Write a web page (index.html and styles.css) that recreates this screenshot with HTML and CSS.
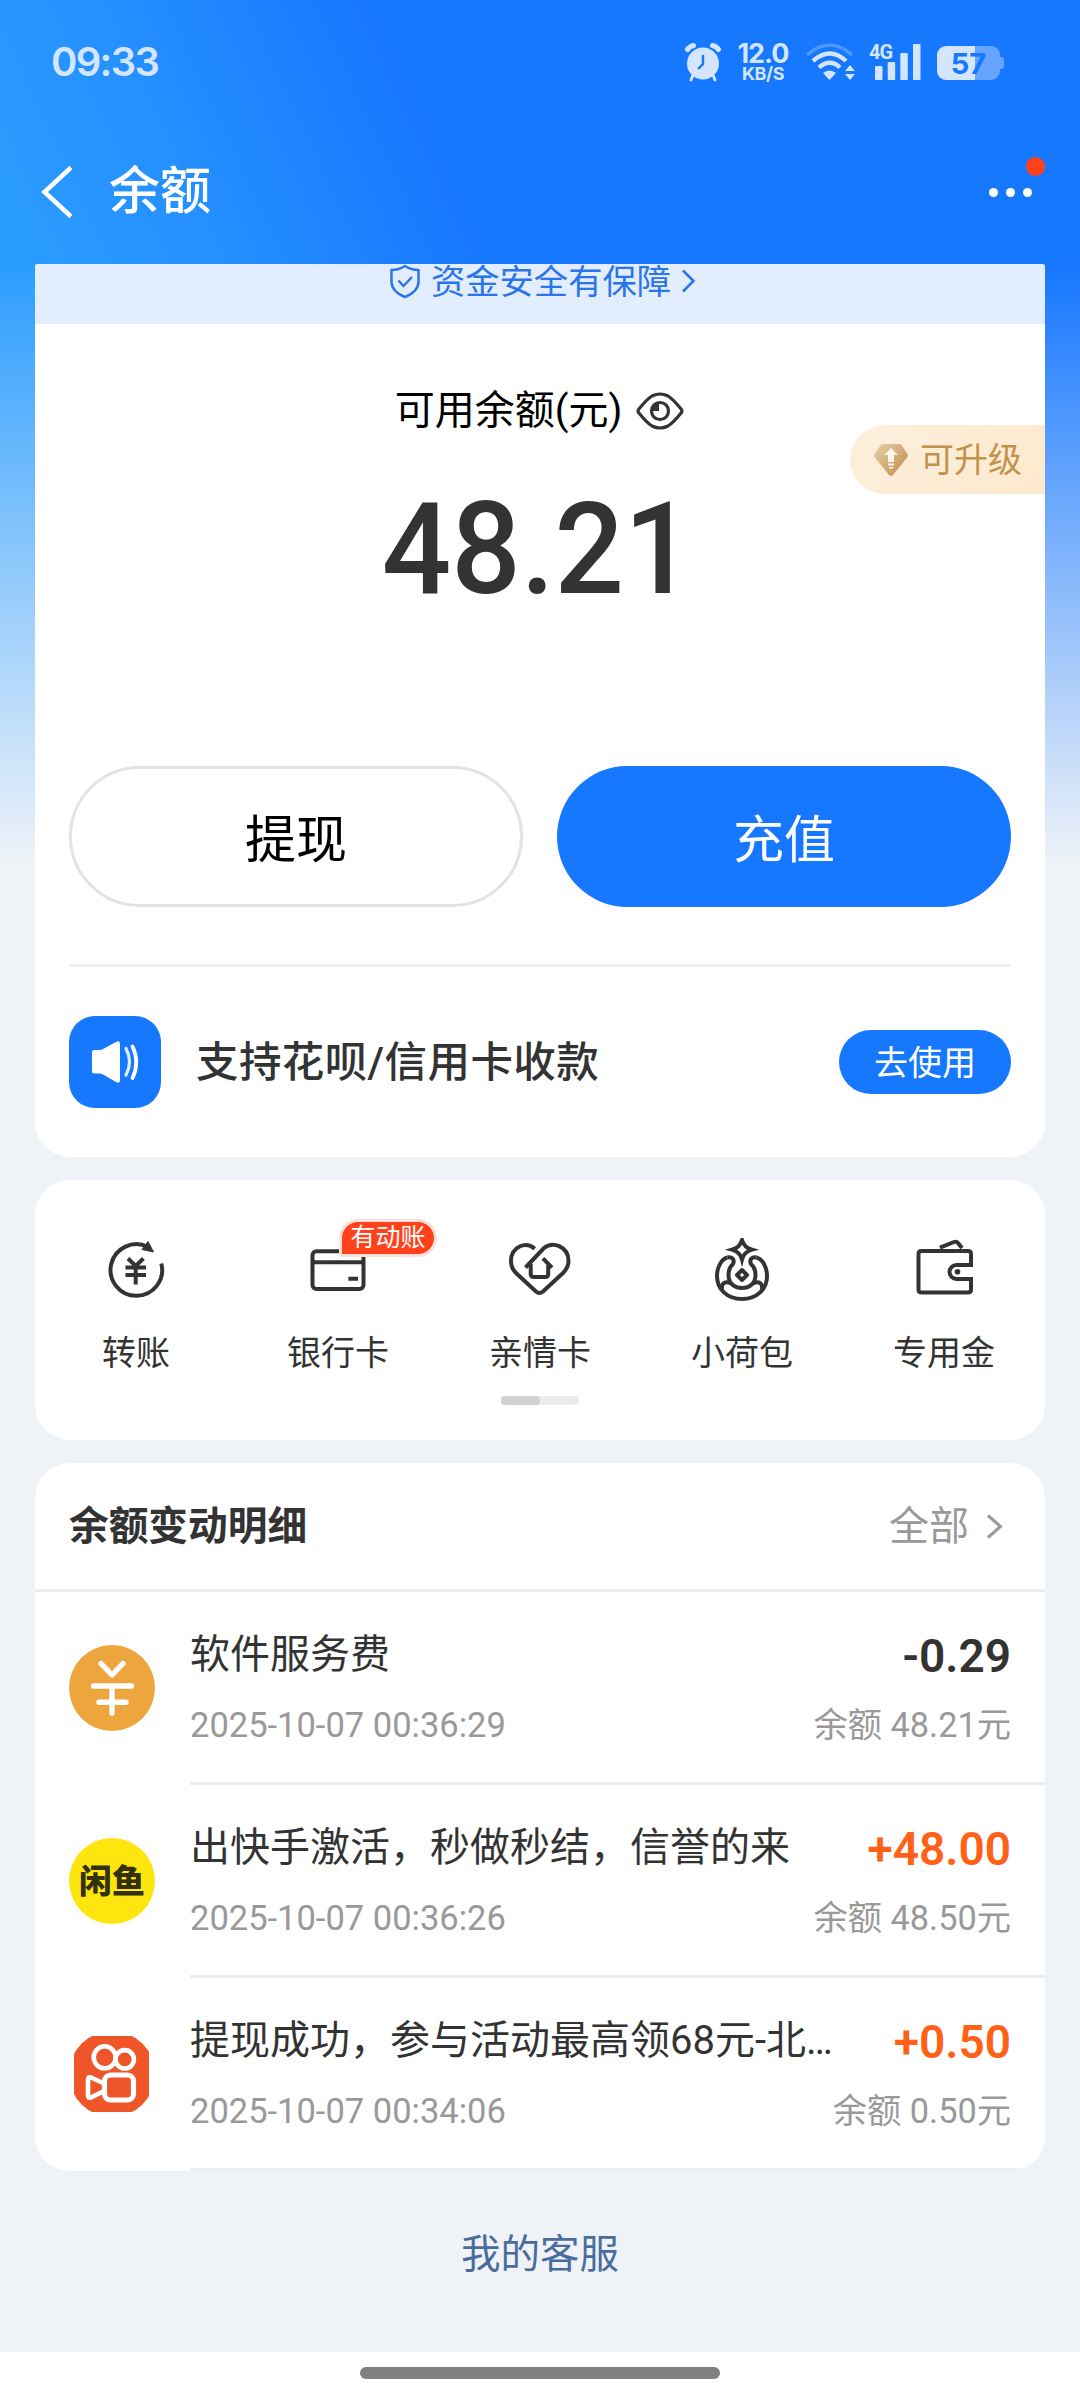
FILE: index.html
```html
<!DOCTYPE html>
<html lang="zh-CN">
<head>
<meta charset="utf-8">
<title>余额</title>
<link rel="stylesheet" href="styles.css">
</head>
<body>
<div class="page">
  <header class="header">
    <div class="status">
      <span class="clock">09:33</span>
      <div class="status-icons">
        <svg class="alarm" width="38" height="40" viewBox="0 0 38 40">
          <g fill="none" stroke="currentColor" stroke-width="5" stroke-linecap="round"><path d="M3.500 7.500Q5.500 4.500 9.500 3.500M34.500 7.500Q32.500 4.500 28.500 3.500"/><path d="M9 33l-2 5M29 33l2 5" stroke-width="3"/></g>
          <circle cx="19" cy="21.500" r="16" fill="currentColor"/>
          <path d="M19 13v9l-5 5" fill="none" stroke="#1677ff" stroke-width="2.400"/>
        </svg>
        <div class="speed"><b>12.0</b><span>KB/S</span></div>
        <svg class="wifi" width="52" height="38" viewBox="0 0 52 38">
          <path d="M2 12Q25-8 47 12" fill="none" stroke="currentColor" stroke-width="3.400" opacity=".3"/>
          <g fill="none" stroke="currentColor" stroke-width="4.400"><path d="M8 18Q25 3 41 18"/><path d="M14 24.500Q25 15 35 24.500"/></g>
          <path d="M18 30Q24.500 25 31 30L24.500 37Z" fill="currentColor"/>
          <path d="M40 28l5-6 5 6zM40 31h10l-5 6z" fill="currentColor"/>
        </svg>
        <div class="signal">
          <span>4G</span>
          <svg width="46" height="38" viewBox="0 0 46 38" fill="currentColor"><rect x="0" y="23" width="7.500" height="14" rx="1"/><rect x="12.700" y="19" width="7.500" height="18" rx="1"/><rect x="25.300" y="10" width="7.500" height="27" rx="1"/><rect x="38" y="1" width="7.500" height="36" rx="1"/></svg>
        </div>
        <div class="battery"><span>57</span></div>
      </div>
    </div>
    <div class="nav">
      <svg class="back" width="32" height="52" viewBox="0 0 32 52"><path d="M31 1.500L4.500 26 31 50.500" fill="none" stroke="#fff" stroke-width="4.600"/></svg>
      <h1>余额</h1>
      <div class="more"><i></i><i></i><i></i><b class="dot"></b></div>
    </div>
  </header>

  <main class="content">
    <section class="card balance">
      <div class="guard">
        <svg width="32" height="35" viewBox="0 0 32 35" fill="none" stroke="#2b74ea" stroke-width="2.500"><path d="M16 2Q22 6 29.500 6V18Q29 28 16 33Q3 28 2.500 18V6Q10 6 16 2Z" stroke-linejoin="round"/><path d="M9.500 16.500l5 5.500 8.500-9"/></svg>
        <span>资金安全有保障</span>
        <svg width="15" height="24" viewBox="0 0 15 24"><path d="M2 1.500L12.500 12 2 22.500" fill="none" stroke="#2b74ea" stroke-width="2.500"/></svg>
      </div>
      <div class="label">
        <span>可用余额(元)</span>
        <svg width="48" height="38" viewBox="0 0 48 38" fill="none" stroke="#333" stroke-width="3.200"><path d="M2.500 17.500Q11 7 16 4Q24 0 32 4Q37 7 45.500 17.500Q46.300 19 45.500 20.500Q37 31 32 34Q24 38 16 34Q11 31 2.500 20.500Q1.700 19 2.500 17.500Z"/><circle cx="24" cy="19" r="8.500"/><path d="M17 12h6v7h-6z" fill="#333" stroke="none"/></svg>
      </div>
      <div class="amount">48.21</div>
      <div class="upgrade">
        <svg width="36" height="34" viewBox="0 0 36 34"><defs><linearGradient id="gem" x1="0" y1="0" x2="1" y2="1"><stop offset="0" stop-color="#e8cfaa"/><stop offset="1" stop-color="#bd8c48"/></linearGradient></defs><path d="M10 1h16q1.500 0 2.500 1l6 9q1 1.500 0 3L20 32q-2 2-4 0L1.500 14q-1-1.500 0-3l6-9q1-1 2.500-1z" fill="url(#gem)"/><path d="M18 5l7 7h-4v7h-6v-7h-4zM15 20.500h6v2h-6zM16 24h4v1.500h-4z" fill="#fff8ec"/></svg>
        <span>可升级</span>
      </div>
      <div class="actions"><button class="btn plain">提现</button><button class="btn primary">充值</button></div>
      <div class="notice">
        <svg width="92" height="92" viewBox="0 0 92 92"><rect width="92" height="92" rx="26" fill="#1677ff"/><path d="M25 34h6q2 0 4-1.500L47 26q4-2 4 2v36q0 4-4 2L35 59q-2-1.500-4-1.500h-6q-2 0-2-2V36q0-2 2-2z" fill="#fff"/><path d="M57 32.500q7 13.500 0 26.500" fill="none" stroke="#d9f0ff" stroke-width="3.200" stroke-linecap="round"/><path d="M63.500 30.500q7.500 15.500 0 31.500" fill="none" stroke="#fff" stroke-width="3.800" stroke-linecap="round"/></svg>
        <span>支持花呗/信用卡收款</span>
        <button class="use">去使用</button>
      </div>
    </section>

    <section class="card tools">
      <div class="grid">
        <div class="tool">
          <svg viewBox="0 0 64 64"><path d="M57.300 25.500A25.800 25.800 0 1 1 44 9"/><path d="M44 3.500L49.500 14 38 11.500Z" fill="#333" stroke-width="1"/><path d="M24 20.500l7.700 7.500 7.700-7.500M21.500 29.500h20.500M21.500 37h20.500M31.700 28v18.500"/></svg>
          <span>转账</span>
        </div>
        <div class="tool">
          <svg viewBox="0 0 64 64"><rect x="6.500" y="13.200" width="51" height="37.800" rx="4"/><path d="M6.500 24.300h51M42.400 40.700H52"/></svg>
          <span>银行卡</span>
          <em class="badge">有动账</em>
        </div>
        <div class="tool">
          <svg viewBox="0 0 64 64"><path d="M26.700 10.700C18 3 3 8.500 3 23C3 28.500 5 32 8 35L28 53.500Q31.500 56.500 35 53.500L55 35C59 31 60.500 28 60.500 23C60.500 8.500 45 3 36 10L17.500 29.500"/><path d="M22.700 26v10q0 3 3 3h11.500q3 0 3-3V27M34.900 20.300L44 29.700"/></svg>
          <span>亲情卡</span>
        </div>
        <div class="tool">
          <svg viewBox="0 0 64 64"><path d="M32 2Q34 9.500 42 11.700Q34 14 32 21.500Q30 14 22 11.700Q30 9.500 32 2Z"/><path d="M17.500 19.500C11 21 7 30 7 38C7 51 17 61 32 61S57 51 57 38C57 30 53 21 46.500 19.500"/><path d="M17.500 19.500C22 18.500 25 21.500 23 26C20 28.500 18.500 32 18.500 37C18.500 45 24 50 32 50S45.500 45 45.500 37C45.500 32 44 28.500 41 26C39 21.500 42 18.500 46.500 19.500"/><path d="M12 52C11 45 15 43 20.500 45M52 52C53 45 49 43 43.500 45"/><path d="M32 32l5 5-5 5-5-5z" stroke-linejoin="round"/></svg>
          <span>小荷包</span>
        </div>
        <div class="tool">
          <svg viewBox="0 0 64 64"><path d="M59 27V16q0-3-3-3H9.500q-3 0-3 3v35.500q0 3 3 3H56q3 0 3-3V41H44.500a7 7 0 0 1 0-14z"/><path d="M28 9.700L42 4q2.500-1 4 1l4 5" /><circle cx="45.500" cy="33.700" r="2.800" fill="#333" stroke="none"/></svg>
          <span>专用金</span>
        </div>
      </div>
      <div class="pager"><i></i></div>
    </section>

    <section class="card history">
      <div class="history-head">
        <h2>余额变动明细</h2>
        <span>全部</span>
        <svg width="18" height="25" viewBox="0 0 18 25"><path d="M2 1.500L14.500 12.500 2 23.500" fill="none" stroke="#999" stroke-width="3"/></svg>
      </div>
      <div class="row">
        <svg class="logo" viewBox="0 0 86 86"><circle cx="43" cy="43" r="43" fill="#eda63e"/><path d="M32 18.500l11 11.500 11-11.500M24.500 41h38M30 57.300h27M43 41v27" fill="none" stroke="#fff" stroke-width="5.400" stroke-linecap="round" stroke-linejoin="round"/></svg>
        <div class="body">
          <div class="line"><p>软件服务费</p><b>-0.29</b></div>
          <div class="line sub"><time>2025-10-07 00:36:29</time><small>余额 48.21元</small></div>
        </div>
      </div>
      <div class="row">
        <div class="logo fish">闲鱼</div>
        <div class="body">
          <div class="line in"><p>出快手激活，秒做秒结，信誉的来</p><b>+48.00</b></div>
          <div class="line sub"><time>2025-10-07 00:36:26</time><small>余额 48.50元</small></div>
        </div>
      </div>
      <div class="row">
        <svg class="logo" viewBox="0 0 86 86"><defs><clipPath id="round"><circle cx="43" cy="43" r="43"/></clipPath></defs><rect x="5" y="5" width="75" height="76" fill="#ee5529" clip-path="url(#round)"/><g fill="none" stroke="#fff" stroke-width="4.600"><circle cx="35.700" cy="26.300" r="11"/><circle cx="55.700" cy="28.300" r="9.200"/><rect x="35.500" y="44" width="29" height="25" rx="6" stroke-width="5.200"/><path d="M35 52.500L22 46.500q-3-1-3 2v16q0 3 3 2L35 60" stroke-linejoin="round"/></g></svg>
        <div class="body">
          <div class="line in"><p>提现成功，参与活动最高领68元-北…</p><b>+0.50</b></div>
          <div class="line sub"><time>2025-10-07 00:34:06</time><small>余额 0.50元</small></div>
        </div>
      </div>
    </section>
    <div class="service">我的客服</div>
  </main>
  <footer class="homebar"><i></i></footer>
</div>
</body>
</html>
```

FILE: styles.css
```css
* { box-sizing: border-box; margin: 0; padding: 0; }
body { width: 1080px; height: 2400px; overflow: hidden; font-family: Roboto, "Noto Sans CJK SC", sans-serif; color: #333; }
svg { display: block; flex: none; }
button { border: 0; font: inherit; }
i, em { font-style: normal; }
.page { width: 1080px; height: 2400px; display: flex; flex-direction: column; background: #eff3f8; }

.header { height: 264px; flex: none; background: linear-gradient(65deg, #2b9dff 0, #2590ff 18%, #1677ff 41%); }
.status { height: 120px; display: flex; justify-content: space-between; padding: 42px 77px 0 51px; color: #d3e5ff; }
.clock { font: 600 40px/40px Inter, sans-serif; letter-spacing: -1.7px; }
.status-icons { display: flex; height: 40px; }
.speed { width: 54px; margin-left: 14px; margin-right: 1px; display: flex; flex-direction: column; align-items: center; font-family: Inter, sans-serif; }
.speed b { font-size: 27px; line-height: 23px; letter-spacing: -1px; }
.speed span { font-size: 18px; font-weight: 700; line-height: 18px; letter-spacing: -.4px; }
.wifi { margin: 1px 0 0 14px; }
.signal { margin-left: 12px; position: relative; padding: 1px 0 0 6px; }
.signal span { position: absolute; left: 0; top: 0; font: 700 20px/20px Roboto, sans-serif; letter-spacing: -1px; }
.battery { position: relative; width: 63px; height: 34px; margin: 4px 3px 0 16px; border-radius: 9px; background: linear-gradient(90deg, #d3e5ff 60%, #65a5ff 60%); text-align: center; font: 700 29px/35px Inter, sans-serif; color: #1677ff; }
.battery::after { content: ""; position: absolute; right: -4px; top: 11px; width: 4px; height: 12px; border-radius: 0 3px 3px 0; background: #65a5ff; }
.nav { height: 144px; display: flex; align-items: flex-start; padding: 45px 48px 0 40px; }
.back { margin-top: 1px; }
.nav h1 { font-size: 51px; font-weight: 500; line-height: 54px; color: #fff; margin-left: 37px; flex: 1; }
.more { position: relative; display: flex; gap: 8px; padding-top: 23px; margin-right: -5px; width: 48px; }
.more i { width: 9px; height: 9px; border-radius: 50%; background: #fff; }
.dot { position: absolute; left: 37px; top: -8px; width: 19px; height: 19px; border-radius: 50%; background: #ff411c; }

.content { height: 2088px; padding: 0 35px; background: linear-gradient(180deg, rgba(239,243,248,0) 0, #eff3f8 601px), linear-gradient(90deg, #2b9dff 0, #2b9dff 35px, #1677ff 600px); }
.card { background: #fff; border-radius: 35px; overflow: hidden; }
.balance { position: relative; height: 893px; border-radius: 3px 3px 35px 35px; }
.guard { height: 60px; background: #e2edfe; display: flex; justify-content: center; padding-left: 5px; color: #2b74ea; font-size: 34.300px; line-height: 36px; }
.guard span { margin: 0 10px 0 10px; }
.guard svg:last-child { margin-top: 5px; }
.label { display: flex; justify-content: center; align-items: center; gap: 14px; height: 56px; margin-top: 59px; padding-right: 1px; font-size: 40px; line-height: 56px; color: #000; }
.amount { height: 128px; margin-top: 46px; padding-right: 5px; text-align: center; font-size: 128px; line-height: 128px; font-weight: 500; transform: scaleX(.955); }
.upgrade { position: absolute; right: 0; top: 161px; width: 195px; height: 69px; padding-left: 23px; display: flex; align-items: center; gap: 11px; border-radius: 35px 0 0 35px; background: linear-gradient(135deg, #fdf0de, #fde9cc); color: #c2924c; font-size: 34px; line-height: 60px; }
.actions { display: grid; grid-template-columns: 1fr 1fr; gap: 34px; padding: 0 34px; margin-top: 153px; }
.btn { height: 141px; border-radius: 71px; font-size: 51px; padding-bottom: 2px; }
.plain { background: #fff; border: 3px solid #e3e3e3; color: #000; }
.primary { background: #1677ff; color: #fff; }
.notice { margin: 57px 34px 0; padding-top: 49px; border-top: 3px solid #eee; display: flex; align-items: center; font-size: 42.500px; font-weight: 500; }
.notice span { margin-left: 35px; padding-bottom: 7px; flex: 1; letter-spacing: .4px; }
.use { width: 172px; height: 64px; padding-bottom: 3px; border-radius: 32px; background: #1677ff; color: #fff; font-size: 34px; font-weight: 400; }

.tools { height: 260px; margin-top: 23px; padding-top: 58px; }
.grid { display: grid; grid-template-columns: repeat(5, 1fr); }
.tool { position: relative; display: flex; flex-direction: column; align-items: center; }
.tool svg { width: 64px; height: 64px; fill: none; stroke: #333; stroke-width: 4; }
.tool span { font-size: 34px; line-height: 50px; margin-top: 26px; }
.badge { position: absolute; left: 102px; top: -19px; height: 38px; width: 98px; border: 3px solid #ffe0da; border-radius: 19px 19px 19px 3px; background: #ff411c; color: #fff; font-size: 25px; line-height: 32px; text-align: center; }
.pager { width: 78px; height: 9px; margin: 18px auto 0; border-radius: 4px; background: #ebebeb; }
.pager i { display: block; width: 39px; height: 9px; border-radius: 4px; background: #d1d1d1; }

.history { height: 708px; margin-top: 23px; }
.history-head { height: 129px; border-bottom: 3px solid #eee; display: flex; align-items: center; padding: 0 41px 0 34px; font-size: 40px; color: #999; }
.history-head h2 { font-size: 39.700px; font-weight: 700; color: #333; flex: 1; padding-bottom: 7px; }
.history-head span { padding-bottom: 7px; }
.history-head svg { margin-left: 17px; }
.row { height: 193px; display: flex; padding-left: 34px; }
.logo { width: 86px; height: 86px; margin: 53px 35px 0 0; flex: none; }
.fish { border-radius: 50%; background: #fde50d; color: #33300c; text-align: center; font: 900 33px/83px "Noto Sans CJK SC", sans-serif; }
.body { flex: 1; min-width: 0; border-bottom: 3px solid #ededee; padding: 39px 34px 0 0; }
.line { display: flex; justify-content: space-between; height: 48px; white-space: nowrap; }
.line p { font-size: 40px; line-height: 48px; }
.line b { font-size: 46px; line-height: 50px; font-weight: 600; }
.sub { height: 40px; margin-top: 26px; font-size: 34.500px; line-height: 40px; color: #999; }
.sub small { font-size: 34.300px; }
.in b { color: #ff6217; }
.service { margin-top: 59px; text-align: center; font-size: 39.500px; line-height: 50px; color: #4a6c9c; }

.homebar { height: 48px; background: #fff; display: flex; justify-content: center; padding-top: 15px; }
.homebar i { width: 360px; height: 12px; border-radius: 6px; background: #808080; }
```
